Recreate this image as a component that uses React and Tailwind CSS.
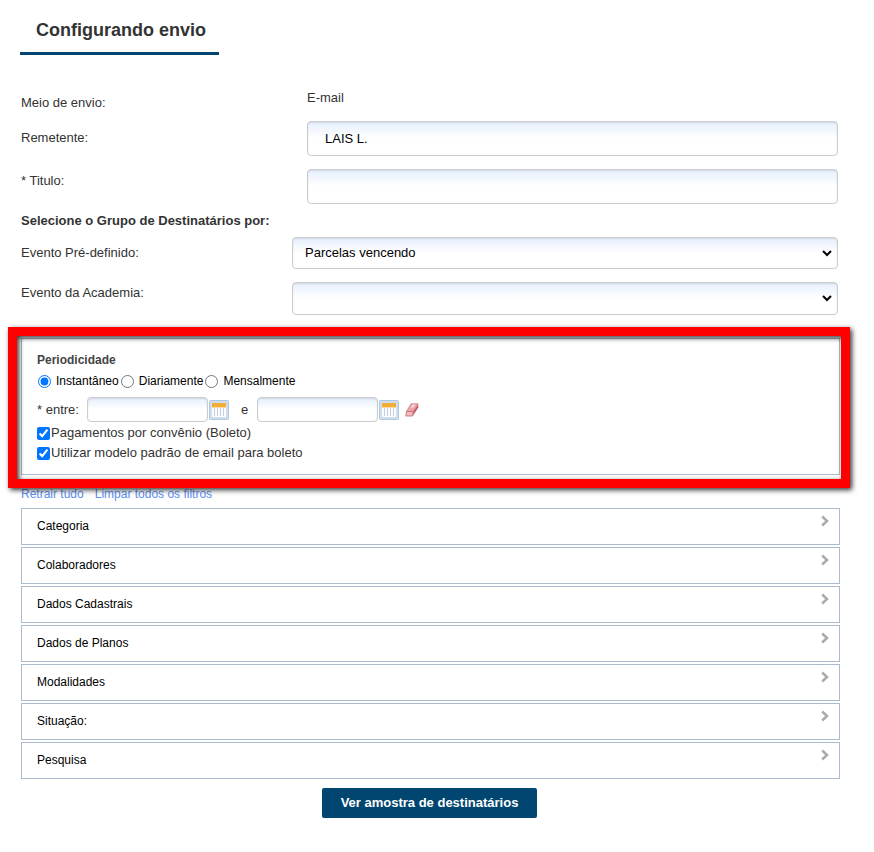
import React, { useState } from 'react';

const FILTERS = ['Categoria', 'Colaboradores', 'Dados Cadastrais', 'Dados de Planos', 'Modalidades', 'Situação:', 'Pesquisa'];

const PERIODS = [
  { id: 'instantaneo', label: 'Instantâneo' },
  { id: 'diariamente', label: 'Diariamente' },
  { id: 'mensalmente', label: 'Mensalmente' },
];

const fieldClass =
  'rounded-[4px] border border-[#ccc] bg-white bg-linear-to-b from-[#e6effc] to-white to-50% shadow-[inset_0_1px_2px_rgba(0,0,0,0.1)] text-black';

function CalendarIcon() {
  return (
    <svg width="20" height="20" viewBox="0 0 20 20" aria-hidden="true">
      <rect x="0.5" y="0.5" width="19" height="19" rx="1" fill="#cfdeee" stroke="#b3c7dc" />
      <rect x="3" y="3" width="14" height="14" fill="#fbfcfe" />
      <path d="M5.500 8v8M8.500 8v8M11.500 8v8M14.500 8v8" stroke="#c3cfdf" />
      <rect x="3" y="3" width="14" height="4" fill="#f3ad35" />
      <path d="M3 7.500h14" stroke="#f8dba8" />
    </svg>
  );
}

function EraserIcon() {
  return (
    <svg width="14" height="14" viewBox="0 0 14 14" aria-hidden="true">
      <path d="M6 .8L13 .8L8.500 8.500H1.500z" fill="#eba5aa" stroke="#d08088" strokeWidth="0.800" />
      <path d="M5.500 4.500L7.500 1.500h3L8.500 4.500z" fill="#f6d3d5" />
      <path d="M1.500 8.500h7L7.500 13H.8z" fill="#f0bdc1" stroke="#c2666d" strokeWidth="0.800" />
      <path d="M13.300 1V4.500L7.800 13L8.500 8.500z" fill="#c25a64" />
    </svg>
  );
}

function ChevronIcon() {
  return (
    <svg width="8" height="12" viewBox="0 0 8 12" aria-hidden="true">
      <path d="M1.200 1.500L6 6L1.200 10.500" fill="none" stroke="#aaa" strokeWidth="2.500" />
    </svg>
  );
}

function SelectField({ id, options, className }) {
  return (
    <div className={`grid flex-1 items-center ${className}`}>
      <select id={id} className={`${fieldClass} col-start-1 row-start-1 h-full w-full appearance-none px-3 text-[13px]`}>
        {options.map((option) => (
          <option key={option}>{option}</option>
        ))}
      </select>
      <svg
        className="pointer-events-none col-start-1 row-start-1 mr-1.5 justify-self-end"
        width="10"
        height="7"
        viewBox="0 0 10 7"
        aria-hidden="true"
      >
        <path d="M1 1l4 4l4-4" fill="none" stroke="#000" strokeWidth="2" />
      </svg>
    </div>
  );
}

function DateField({ label }) {
  return (
    <>
      <input type="text" aria-label={label} className={`${fieldClass} h-[25px] w-[121px] px-2`} />
      <button type="button" aria-label={`Abrir calendário: ${label}`} className="ml-px">
        <CalendarIcon />
      </button>
    </>
  );
}

function App() {
  const [period, setPeriod] = useState('instantaneo');
  const [boleto, setBoleto] = useState(true);
  const [defaultTemplate, setDefaultTemplate] = useState(true);
  const [title, setTitle] = useState('');

  return (
    <div className="bg-white pb-8 pl-5 pr-[34px] font-['Liberation_Sans',Arial,sans-serif] text-[13px] leading-4 text-[#333]">
      <h1 className="inline-block border-b-3 border-[#004671] pb-[11px] pl-4 pr-[13px] pt-[19px] text-[18px] leading-[22px] font-bold">
        Configurando envio
      </h1>

      <form className="pl-px pt-[35px]" onSubmit={(e) => e.preventDefault()}>
        <div className="flex h-[31px]">
          <span className="w-[286px] pt-[5px]">Meio de envio:</span>
          <span>E-mail</span>
        </div>

        <div className="mr-0.5 flex">
          <label htmlFor="remetente" className="w-[286px] shrink-0 pt-[9px]">Remetente:</label>
          <input id="remetente" defaultValue="LAIS L." className={`${fieldClass} h-[35px] min-w-0 flex-1 px-[17px]`} />
        </div>

        <div className="mr-0.5 mt-[13px] flex">
          <label htmlFor="titulo" className="w-[286px] shrink-0 pt-1">* Titulo:</label>
          <input
            id="titulo"
            value={title}
            onChange={(e) => setTitle(e.target.value)}
            className={`${fieldClass} h-[35px] min-w-0 flex-1 px-[17px]`}
          />
        </div>

        <h2 className="mt-[9px] font-bold">Selecione o Grupo de Destinatários por:</h2>

        <div className="mr-0.5 mt-2 flex">
          <label htmlFor="evento" className="w-[271px] shrink-0 pt-2">Evento Pré-definido:</label>
          <SelectField id="evento" options={['Parcelas vencendo']} className="h-8" />
        </div>

        <div className="mr-0.5 mt-[13px] flex">
          <label htmlFor="academia" className="w-[271px] shrink-0 pt-[3px]">Evento da Academia:</label>
          <SelectField id="academia" options={['']} className="h-[33px]" />
        </div>

        <section className="relative mt-[23px] border border-[#a9bbcd] px-[15px] pb-[13px] pt-[13px]">
          <h3 className="text-[12px] font-bold text-[#444]">Periodicidade</h3>

          <div className="mt-[5px] flex items-center text-[12px] text-black">
            {PERIODS.map(({ id, label }) => (
              <label key={id} className="flex items-center gap-[5px] pr-px">
                <input
                  type="radio"
                  name="periodo"
                  className="ml-px size-[13px]"
                  checked={period === id}
                  onChange={() => setPeriod(id)}
                />
                {label}
              </label>
            ))}
          </div>

          <div className="mt-2 flex items-center">
            <span className="w-[50px]">* entre:</span>
            <DateField label="Data inicial" />
            <span className="w-7 pl-3">e</span>
            <DateField label="Data final" />
            <button type="button" aria-label="Limpar datas" className="ml-1.5">
              <EraserIcon />
            </button>
          </div>

          <label className="mt-[3px] flex items-center gap-px">
            <input
              type="checkbox"
              className="size-[13px]"
              checked={boleto}
              onChange={(e) => setBoleto(e.target.checked)}
            />
            Pagamentos por convênio (Boleto)
          </label>
          <label className="mt-1 flex items-center gap-px">
            <input
              type="checkbox"
              className="size-[13px]"
              checked={defaultTemplate}
              onChange={(e) => setDefaultTemplate(e.target.checked)}
            />
            Utilizar modelo padrão de email para boleto
          </label>

          {/* Red highlight over the section */}
          <div className="pointer-events-none absolute -bottom-3.5 -left-3.5 -right-[11px] -top-3 z-10 border-9 border-[#fe0000] shadow-[2px_2px_5px_rgba(0,0,0,0.8),inset_2px_2px_5px_rgba(0,0,0,0.8)]"></div>
        </section>

        <div className="mt-[11px] flex gap-[11px] text-[12px] text-[#5b8def]">
          <a href="#retrair">Retrair tudo</a>
          <a href="#limpar">Limpar todos os filtros</a>
        </div>

        <div className="mt-1.5 flex flex-col gap-0.5">
          {FILTERS.map((name) => (
            <button
              key={name}
              type="button"
              className="flex h-[37px] items-center justify-between border border-[#a9bbcd] pb-px pl-[15px] pr-[10px] text-[12px] text-black"
            >
              {name}
              <span className="pb-2.5">
                <ChevronIcon />
              </span>
            </button>
          ))}
        </div>

        <div className="mt-[9px] flex justify-center pr-0.5">
          <button type="submit" className="h-[30px] rounded-[2px] bg-[#004671] px-[19px] font-bold text-white">
            Ver amostra de destinatários
          </button>
        </div>
      </form>
    </div>
  );
}

export default App;
